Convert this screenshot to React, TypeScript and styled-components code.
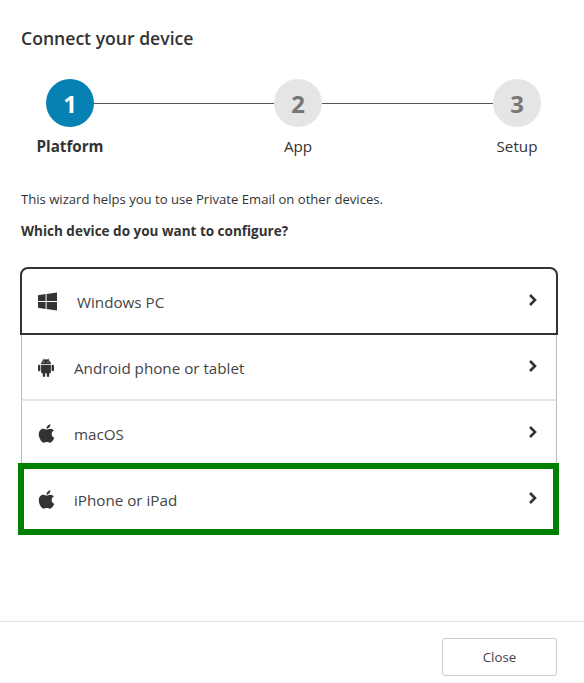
import React from "react";
import styled, { createGlobalStyle } from "styled-components";
import { FaApple } from "react-icons/fa";

const GlobalStyle = createGlobalStyle`
  html, body {
    margin: 0;
    background: #fff;
  }
  body {
    font-family: "Open Sans", "Noto Sans", sans-serif;
    color: #333;
  }
`;

const Dialog = styled.div`
  width: 584px;
  height: 683px;
  display: flex;
  flex-direction: column;
  overflow: hidden;
`;

const Body = styled.div`
  flex: 1;
  padding: 27px 27px 0 21px;
`;

const Title = styled.h2`
  margin: 0;
  font-size: 17.6px;
  line-height: 22px;
  font-weight: 600;
  color: #333;
`;

const Stepper = styled.div`
  display: flex;
  align-items: flex-start;
  margin: 30px 0 0 25px;
`;

const Step = styled.div`
  width: 48px;
  display: flex;
  flex-direction: column;
  align-items: center;
  flex-shrink: 0;
`;

const Circle = styled.div<{ $active?: boolean }>`
  width: 48px;
  height: 48px;
  border-radius: 50%;
  display: flex;
  align-items: center;
  justify-content: center;
  font-size: 24px;
  font-weight: 700;
  background: ${(p) => (p.$active ? "#0581b4" : "#e5e5e5")};
  color: ${(p) => (p.$active ? "#fff" : "#777")};
`;

const StepLabel = styled.div<{ $active?: boolean }>`
  margin-top: 9px;
  font-size: 15.2px;
  line-height: 20px;
  white-space: nowrap;
  font-weight: ${(p) => (p.$active ? 700 : 400)};
`;

const Connector = styled.div<{ $width: number }>`
  width: ${(p) => p.$width}px;
  height: 1px;
  margin-top: 23.5px;
  background: #555;
  flex-shrink: 0;
`;

const Intro = styled.p`
  margin: 34px 0 0;
  font-size: 13.1px;
  line-height: 18px;
`;

const Question = styled.p`
  margin: 14px 0 0;
  font-size: 13.5px;
  line-height: 18px;
  font-weight: 700;
`;

const DeviceList = styled.div`
  margin-top: 27px;
  display: flex;
  flex-direction: column;
  width: 536px;
`;

const DeviceRow = styled.div<{ $focused?: boolean; $marked?: boolean }>`
  box-sizing: border-box;
  display: flex;
  align-items: center;
  height: 66px;
  padding: 2px 18px 0 16px;
  border-left: 1px solid #bbb;
  border-right: 1px solid #bbb;
  border-bottom: 2px solid #e3e3e3;
  font-size: 15.2px;
  color: #444;

  ${(p) =>
    p.$focused &&
    `
    height: 68px;
    margin: 0 -1px;
    border: 2px solid #333;
    border-radius: 8px 8px 0 0;
    padding: 2px 18px 0 16px;
  `}

  ${(p) =>
    p.$marked &&
    `
    height: 72px;
    margin: -4px -2px 0 -3px;
    border: 6px solid #008000;
    padding: 2px 15px 0 14px;
  `}
`;

const IconSlot = styled.span<{ $gap: number }>`
  display: flex;
  align-items: center;
  width: 19px;
  margin: 0 ${(p) => p.$gap}px 2px 0;
  font-size: 21px;
  color: #333;
`;

const AppleIcon = styled(FaApple)`
  margin-left: -2px;
  flex-shrink: 0;
`;

const DeviceName = styled.span`
  flex: 1;
`;

const Chevron = styled.svg`
  width: 10px;
  height: 14px;
  margin-bottom: 4px;
  flex-shrink: 0;
`;

const Footer = styled.div`
  display: flex;
  justify-content: flex-end;
  padding: 16px 27px 7px 0;
  border-top: 1px solid #e3e3e3;
`;

const CloseButton = styled.button`
  box-sizing: border-box;
  width: 115px;
  height: 38px;
  background: #fff;
  border: 1px solid #ccc;
  border-radius: 3px;
  font-family: inherit;
  font-size: 13.3px;
  color: #444;
`;

const ChevronIcon = () => (
  <Chevron viewBox="0 0 10 14">
    <path d="M2 2l5 5-5 5" fill="none" stroke="#333" strokeWidth="2.6" />
  </Chevron>
);

const WindowsIcon = () => (
  <svg width="19" height="19" viewBox="0 0 19 19" fill="#333">
    <path d="M0 3.2L7.6 2.1V9H0zM8.6 2L19 .4V9H8.6zM0 10h7.6v6.9L0 15.8zM8.6 10H19v8.6L8.6 17z" />
  </svg>
);

const AndroidIcon = () => (
  <svg width="16" height="19" viewBox="0 0 16 19" fill="#333">
    <path d="M3.1 6.2a4.9 4.9 0 0 1 9.8 0z" />
    <path d="M5 .6l1.2 2M11 .6l-1.2 2" stroke="#333" strokeWidth=".7" />
    <circle cx="6" cy="4" r=".6" fill="#fff" />
    <circle cx="10" cy="4" r=".6" fill="#fff" />
    <path d="M3.1 7h9.8v7.2a1 1 0 0 1-1 1H4.1a1 1 0 0 1-1-1z" />
    <rect x="0" y="6.8" width="2.4" height="6.4" rx="1.2" />
    <rect x="13.6" y="6.8" width="2.4" height="6.4" rx="1.2" />
    <rect x="4.8" y="14" width="2.4" height="5" rx="1.2" />
    <rect x="8.8" y="14" width="2.4" height="5" rx="1.2" />
  </svg>
);

const steps = [
  { n: 1, label: "Platform", active: true },
  { n: 2, label: "App" },
  { n: 3, label: "Setup" },
];

const lineWidths = [180, 171];

export default function App() {
  return (
    <>
      <GlobalStyle />
      <Dialog>
        <Body>
          <Title>Connect your device</Title>
          <Stepper>
            {steps.map((s, i) => (
              <React.Fragment key={s.n}>
                <Step>
                  <Circle $active={s.active}>{s.n}</Circle>
                  <StepLabel $active={s.active}>{s.label}</StepLabel>
                </Step>
                {i < 2 && <Connector $width={lineWidths[i]} />}
              </React.Fragment>
            ))}
          </Stepper>
          <Intro>This wizard helps you to use Private Email on other devices.</Intro>
          <Question>Which device do you want to configure?</Question>
          <DeviceList>
            <DeviceRow $focused>
              <IconSlot $gap={20}>
                <WindowsIcon />
              </IconSlot>
              <DeviceName>Windows PC</DeviceName>
              <ChevronIcon />
            </DeviceRow>
            <DeviceRow>
              <IconSlot $gap={17}>
                <AndroidIcon />
              </IconSlot>
              <DeviceName>Android phone or tablet</DeviceName>
              <ChevronIcon />
            </DeviceRow>
            <DeviceRow>
              <IconSlot $gap={17}>
                <AppleIcon />
              </IconSlot>
              <DeviceName>macOS</DeviceName>
              <ChevronIcon />
            </DeviceRow>
            <DeviceRow $marked>
              <IconSlot $gap={17}>
                <AppleIcon />
              </IconSlot>
              <DeviceName>iPhone or iPad</DeviceName>
              <ChevronIcon />
            </DeviceRow>
          </DeviceList>
        </Body>
        <Footer>
          <CloseButton>Close</CloseButton>
        </Footer>
      </Dialog>
    </>
  );
}
